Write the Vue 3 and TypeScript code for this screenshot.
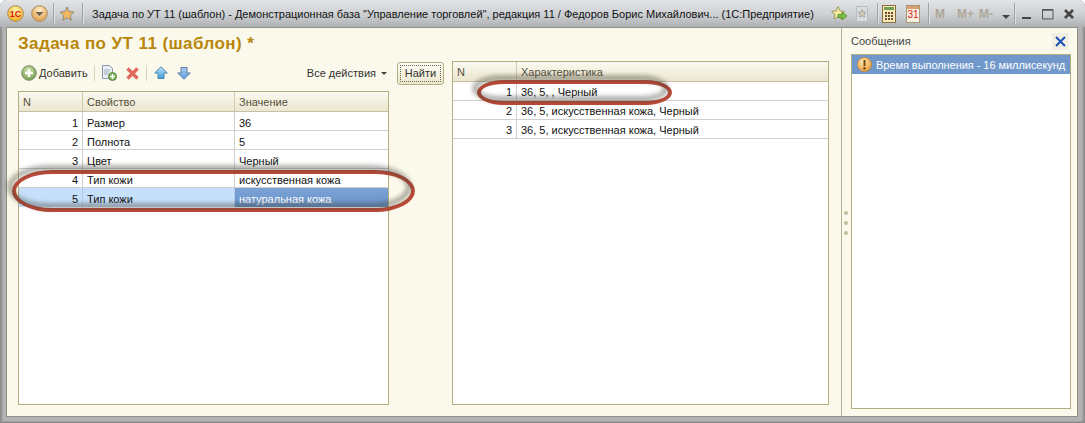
<script setup lang="ts">
const leftRows = [
  { n: 1, prop: 'Размер', val: '36' },
  { n: 2, prop: 'Полнота', val: '5' },
  { n: 3, prop: 'Цвет', val: 'Черный' },
  { n: 4, prop: 'Тип кожи', val: 'искусственная кожа' },
  { n: 5, prop: 'Тип кожи', val: 'натуральная кожа', active: true },
]
const rightRows = [
  { n: 1, val: '36, 5, , Черный' },
  { n: 2, val: '36, 5, искусственная кожа, Черный' },
  { n: 3, val: '36, 5, искусственная кожа, Черный' },
]
</script>

<template>
  <div class="window">
    <header class="titlebar">
      <svg class="tb-ic first" width="17" height="17" viewBox="0 0 17 17"><defs><radialGradient id="y1" cx=".5" cy=".3" r=".7"><stop offset="0" stop-color="#fff6b0"/><stop offset="1" stop-color="#f2ae1c"/></radialGradient></defs><circle cx="8.500" cy="8.500" r="7.800" fill="url(#y1)" stroke="#a88a50"/><text x="8.500" y="11.500" text-anchor="middle" font-size="9" font-weight="bold" font-family="Liberation Sans" fill="#d81818">1С</text></svg>
      <svg class="tb-ic" width="17" height="17" viewBox="0 0 17 17"><defs><radialGradient id="y2" cx=".5" cy=".3" r=".7"><stop offset="0" stop-color="#fff0c8"/><stop offset="1" stop-color="#e09a48"/></radialGradient></defs><circle cx="8.500" cy="8.500" r="7.800" fill="url(#y2)" stroke="#a88a60"/><path d="M4.500 7h8l-4 4z" fill="#6b6050"/></svg>
      <i class="tb-sep s1"></i>
      <svg class="tb-ic star" width="16" height="16" viewBox="0 0 16 16"><path d="M8 1l2 4.600 5 .5-3.700 3.300 1 4.900L8 11.800l-4.300 2.500 1-4.900L1 6.100l5-.5z" fill="#f4b860" stroke="#8f8a78"/></svg>
      <i class="tb-sep s2"></i>
      <span class="title">Задача по УТ 11 (шаблон) - Демонстрационная база "Управление торговлей", редакция 11 / Федоров Борис Михайлович... (1С:Предприятие)</span>
      <svg class="r-ic fav-go" width="18" height="18" viewBox="0 0 18 18"><path d="M8 1.500l2 4.400 4.500.5-3.300 3 .9 4.600L8 11.700l-4 2.300.9-4.600-3.300-3 4.500-.5z" fill="#f5e8a0" stroke="#a09a60"/><path d="M8 9.500h4V7l5 4-5 4v-2.500H8z" fill="#80c040" stroke="#4a8a20" stroke-width=".8"/></svg>
      <svg class="r-ic fav-doc" width="16" height="18" viewBox="0 0 16 18"><path d="M2.500 1.500h11v15h-11z" fill="#d8dde0" stroke="#b6bcc4"/><path d="M8 4.500l1.200 2.600 2.800.3-2 1.900.5 2.800L8 10.700l-2.500 1.400.5-2.800-2-1.900 2.800-.3z" fill="#cfcbbc" stroke="#aca999"/></svg>
      <i class="tb-sep s3"></i>
      <svg class="r-ic calc" width="14" height="18" viewBox="0 0 14 18"><rect x=".5" y=".5" width="13" height="17" fill="#f8e8b8" stroke="#8a7040"/><rect x="2" y="2" width="10" height="3" fill="#70a050"/><path d="M3 7h2v2H3zM6 7h2v2H6zM9 7h2v2H9zM3 10h2v2H3zM6 10h2v2H6zM9 10h2v2H9zM3 13h2v2H3zM6 13h2v2H6zM9 13h2v2H9z" fill="#705030"/></svg>
      <span class="cal"><b></b><em>31</em></span>
      <i class="tb-sep s4"></i>
      <span class="mem m1">M</span><span class="mem">M+</span><span class="mem">M-</span>
      <i class="caret"></i>
      <i class="tb-sep s5"></i>
      <svg class="win-btn min" width="12" height="12" viewBox="0 0 12 12"><path d="M1 10h9" stroke="#444" stroke-width="2.200"/></svg>
      <svg class="win-btn max" width="12" height="12" viewBox="0 0 12 12"><path d="M.5 1.500h10.500v9.500H.5z" fill="none" stroke="#555"/><path d="M.5 2h10.500" stroke="#555" stroke-width="1.500"/></svg>
      <svg class="win-btn cls" width="12" height="12" viewBox="0 0 12 12"><path d="M2 2l8 8M10 2l-8 8" stroke="#444" stroke-width="2.600"/></svg>
    </header>

    <div class="body">
      <main class="form">
        <h1>Задача по УТ 11 (шаблон) *</h1>
        <div class="columns">
          <section class="left">
            <div class="toolbar">
              <svg class="add" width="16" height="16" viewBox="0 0 16 16"><defs><radialGradient id="g1" cx=".45" cy=".35" r=".7"><stop offset="0" stop-color="#d6e8b0"/><stop offset="1" stop-color="#6e9a48"/></radialGradient></defs><circle cx="8" cy="8" r="7.300" fill="url(#g1)" stroke="#7d8c70"/><path d="M8 4v8M4 8h8" stroke="#fff" stroke-width="2.400"/></svg>
              <span class="add-label">Добавить</span>
              <i class="sep"></i>
              <svg class="copy" width="16" height="16" viewBox="0 0 16 16"><path d="M1.500.5h7l3 3v10h-10z" fill="#e8eef4" stroke="#8a98a8"/><path d="M3 5h6M3 7h5M3 9h4" stroke="#a0b0c0"/><circle cx="11.500" cy="11.500" r="4" fill="#78ae58" stroke="#5c8c44"/><path d="M11.500 9v5M9 11.500h5" stroke="#fff" stroke-width="1.500"/></svg>
              <svg class="del" width="13" height="13" viewBox="0 0 13 13"><path d="M1.500 1.500l10 10M11.500 1.500l-10 10" stroke="#e0685e" stroke-width="3.400"/></svg>
              <i class="sep s-b"></i>
              <svg class="up" width="14" height="14" viewBox="0 0 14 14"><defs><linearGradient id="u1" x1="0" y1="0" x2="0" y2="1"><stop offset="0" stop-color="#bfe6fa"/><stop offset="1" stop-color="#3c9ce0"/></linearGradient></defs><path d="M7 .8L13.300 7H10v5.500H4V7H.7z" fill="url(#u1)" stroke="#4c84a8"/></svg>
              <svg class="down" width="14" height="14" viewBox="0 0 14 14"><defs><linearGradient id="d1" x1="0" y1="0" x2="0" y2="1"><stop offset="0" stop-color="#a8d0f0"/><stop offset="1" stop-color="#5c9ce0"/></linearGradient></defs><path d="M7 13.200L13.300 7H10V1.500H4V7H.7z" fill="url(#d1)" stroke="#5c80a4"/></svg>
              <span class="all">Все действия</span>
              <i class="mini-caret"></i>
            </div>
            <div class="grid g-left">
              <div class="head"><div class="c n">N</div><div class="c p">Свойство</div><div class="c v">Значение</div></div>
              <div v-for="r in leftRows" :key="r.n" class="row" :class="{ active: r.active }">
                <div class="c n num">{{ r.n }}</div><div class="c p">{{ r.prop }}</div><div class="c v">{{ r.val }}</div>
              </div>
              <div class="ring ring-l"></div>
            </div>
          </section>
          <div class="find-wrap"><button class="find"><span>Найти</span></button></div>
          <section class="right">
            <div class="grid g-right">
              <div class="head"><div class="c n">N</div><div class="c w">Характеристика</div></div>
              <div v-for="r in rightRows" :key="r.n" class="row">
                <div class="c n num">{{ r.n }}</div><div class="c w">{{ r.val }}</div>
              </div>
              <div class="ring ring-r"></div>
            </div>
          </section>
        </div>
      </main>
      <aside class="messages">
        <div class="dots"><i></i><i></i><i></i></div>
        <div class="msg-head">
          <span>Сообщения</span>
          <span class="close"><svg width="11" height="11" viewBox="0 0 11 11"><path d="M1 1l9 9M10 1l-9 9" stroke="#1a52b8" stroke-width="2"/></svg></span>
        </div>
        <div class="msg-list">
          <div class="msg">
            <svg width="15" height="15" viewBox="0 0 15 15"><defs><radialGradient id="o1" cx=".4" cy=".3" r=".8"><stop offset="0" stop-color="#ffe8b0"/><stop offset="1" stop-color="#e89830"/></radialGradient></defs><circle cx="7.500" cy="7.500" r="7" fill="url(#o1)" stroke="#c08840"/><path d="M7.500 3v6" stroke="#704810" stroke-width="2"/><circle cx="7.500" cy="11.300" r="1.200" fill="#704810"/></svg>
            <span>Время выполнения - 16 миллисекунд</span>
          </div>
        </div>
      </aside>
    </div>
  </div>
</template>

<style>
html, body { margin: 0; padding: 0; overflow: hidden; background: #fff; }
</style>

<style scoped>
.window {
  width: 1085px; height: 423px; box-sizing: border-box; overflow: hidden;
  display: flex; flex-direction: column;
  background: #b4b4b4;
  border-radius: 7px 7px 0 0;
  font: 11px "Liberation Sans", Arial, sans-serif; color: #333;
  padding: 0 7px 6px 6px;
  box-shadow: inset 3px 0 2px -1px #8c8c8c, inset -3px 0 2px -1px #8c8c8c, inset 0 -2px 2px -1px #777;
}
.titlebar {
  height: 27px; flex: none; margin: 0 -7px 0 -6px;
  display: flex; align-items: center;
  background: linear-gradient(#e2e4e6, #cdd0d3 55%, #aeb0b2);
}
.tb-ic, .r-ic, .win-btn, .cal, .mem, .caret, .tb-sep { flex: none; }
.tb-ic { margin-left: 7px; }
.tb-sep { width: 1px; height: 21px; background: #9ea2a6; border-right: 1px solid #e0e3e6; }
.s1 { margin-left: 5px; }
.tb-ic.star { margin-left: 4px; }
.s2 { margin-left: 7px; }
.title { margin-left: 8px; width: 738px; flex: none; white-space: nowrap; font-size: 11px; color: #111; }
.fav-doc { margin-left: 6px; }
.s3 { margin-left: 7px; }
.calc { margin-left: 3px; }
.cal { width: 14px; height: 18px; margin-left: 10px; box-sizing: border-box; border: 1px solid #a89878; background: #f8f0e0; display: flex; flex-direction: column; align-items: center; }
.cal b { display: block; width: 100%; height: 3px; background: #d8a070; }
.cal em { font: normal 10px/12px "Liberation Sans", sans-serif; color: #d02020; }
.s4 { margin-left: 8px; }
.mem { font: bold 12px "Liberation Sans", sans-serif; color: #aea698; width: 22px; }
.m1 { margin-left: 5px; }
.caret { width: 0; height: 0; margin: 7px 0 0 1px; border: 4px solid transparent; border-top-color: #444; border-bottom: 0; }
.s5 { margin-left: 4px; }
.win-btn.min { margin-left: 5px; }
.win-btn.max { margin-left: 9px; }
.win-btn.cls { margin-left: 9px; }

.body { flex: 1; min-height: 0; display: flex; background: #fbf9eb; border: 1px solid #8f8f86; }
.form { width: 835px; flex: none; box-sizing: border-box; border-right: 1px solid #b5b197; padding-left: 11px; display: flex; flex-direction: column; }
h1 { margin: 7px 0 0; font: bold 17px/18px "Liberation Sans", sans-serif; color: #b8860b; letter-spacing: .42px; height: 18px; }
.columns { display: flex; flex: 1; min-height: 0; margin-top: 8px; padding-bottom: 11px; }
.left { width: 371px; flex: none; display: flex; flex-direction: column; }
.toolbar { height: 22px; display: flex; align-items: center; margin: 1px 0 7px 3px; flex: none; }
.add-label { margin-left: 2px; }
.sep { width: 1px; height: 16px; background: #d8d4b8; margin-left: 6px; }
.copy { margin-left: 6px; }
.del { margin-left: 9px; }
.s-b { margin-left: 7px; }
.up { margin-left: 7px; }
.down { margin-left: 9px; }
.all { margin-left: auto; }
.mini-caret { width: 0; height: 0; border: 3px solid transparent; border-top-color: #444; border-bottom: 0; margin: 1px 2px 0 5px; }
.grid { position: relative; box-sizing: border-box; border: 1px solid #b5ad82; background: #fff; flex: 1; min-height: 0; }
.head, .row { display: flex; box-sizing: border-box; }
.head { height: 20px; line-height: 21px; background: linear-gradient(#fbfaf1, #ebe6cf); color: #55503c; border-bottom: 1px solid #c6c1a6; }
.row { height: 19px; line-height: 18px; color: #111; border-bottom: 1px solid #cfcfcf; }
.g-left .row .c { padding-top: 2px; }
.g-right .row .c { padding-top: 1px; }
.c { box-sizing: border-box; padding: 0 4px; white-space: nowrap; border-right: 1px solid #cfcfcf; overflow: hidden; }
.head .c { border-right-color: #cfc9ae; }
.num { text-align: right; }
.g-left .n { width: 64px; }
.g-left .p { width: 152px; }
.g-left .v { flex: 1; border-right: 0; }
.row.active { background: #c6e0fb; border-bottom: 0; }
.row.active .c { border-right-color: #aecbe6; }
.row.active .v { background: linear-gradient(#7ba2d6, #6a94c8); color: #fff; }
.find-wrap { width: 63px; flex: none; padding: 1px 0 0 8px; box-sizing: border-box; }
.find { display: block; width: 47px; height: 23px; padding: 2px; box-sizing: border-box; border: 1px solid #b5ad82; border-radius: 3px; background: linear-gradient(#fdfcf3, #ebe7cf); font: 11px "Liberation Sans", sans-serif; color: #333; }
.find span { display: block; height: 17px; line-height: 15px; border: 1px dotted #6a6650; box-sizing: border-box; }
.right { width: 377px; flex: none; display: flex; flex-direction: column; }
.g-right .n { width: 64px; }
.g-right .w { flex: 1; border-right: 0; }
.ring { position: absolute; box-sizing: border-box; border: 4px solid #bc4a38; pointer-events: none; }
.ring::before { content: ""; position: absolute; inset: -8px 0 0 -8px; width: calc(100% + 8px); height: calc(100% + 8px); box-sizing: border-box; border: 4px solid rgba(60,60,50,.6); border-radius: inherit; filter: blur(2.5px); }
.ring-l { left: -7px; top: 78px; width: 403px; height: 42px; border-radius: 40px / 21px; }
.ring-r { left: 24px; top: 18px; width: 195px; height: 25px; border-radius: 26px / 12.500px; }
.messages { flex: 1; min-width: 0; position: relative; padding: 0 6px 7px 9px; display: flex; flex-direction: column; box-sizing: border-box; }
.dots { position: absolute; left: 2px; top: 183px; display: flex; flex-direction: column; gap: 6px; }
.dots i { width: 4px; height: 4px; border-radius: 50%; background: #c4c09e; }
.msg-head { height: 26px; flex: none; display: flex; align-items: center; justify-content: space-between; color: #444; }
.close { width: 17px; height: 17px; background: #f1efe0; display: flex; align-items: center; justify-content: center; margin-right: 2px; }
.msg-list { flex: 1; min-height: 0; box-sizing: border-box; border: 1px solid #b5ad82; background: #fff; }
.msg { height: 19px; background: #7198cb; color: #fff; display: flex; align-items: center; padding-left: 5px; gap: 4px; white-space: nowrap; letter-spacing: -.05px; }
.msg svg { flex: none; }
</style>
